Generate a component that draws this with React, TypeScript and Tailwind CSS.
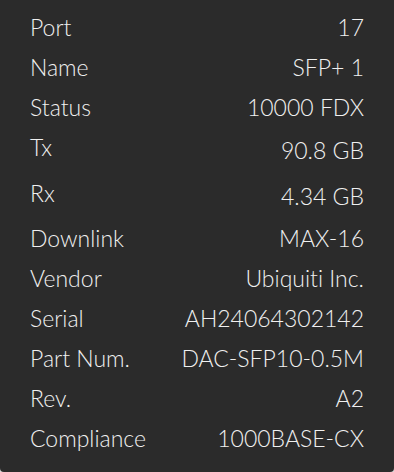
type Row = { label: string; value: string; tall?: number };

const rows: Row[] = [
  { label: "Port", value: "17" },
  { label: "Name", value: "SFP+ 1" },
  { label: "Status", value: "10000 FDX" },
  { label: "Tx", value: "90.8 GB", tall: 46 },
  { label: "Rx", value: "4.34 GB", tall: 45 },
  { label: "Downlink", value: "MAX-16" },
  { label: "Vendor", value: "Ubiquiti Inc." },
  { label: "Serial", value: "AH24064302142" },
  { label: "Part Num.", value: "DAC-SFP10-0.5M" },
  { label: "Rev.", value: "A2" },
  { label: "Compliance", value: "1000BASE-CX" },
];

export default function App() {
  return (
    <div className="bg-[#d9d9d9] w-[394px] h-[472px]">
      <div
        className="bg-[#2b2b2b] text-[#f0f0f0] w-full h-full rounded-b-[4px] pt-[7px] pl-[30px] pr-[30px] text-[23px] leading-[40px] font-light [font-variant-ligatures:none]"
        style={{ fontFamily: "Lato, sans-serif" }}
      >
        {rows.map((r) => (
          <div
            key={r.label}
            className="flex justify-between whitespace-nowrap"
            style={{ height: r.tall ?? 40 }}
          >
            <span>{r.label}</span>
            <span className={r.tall ? "pt-[3px]" : ""}>{r.value}</span>
          </div>
        ))}
      </div>
    </div>
  );
}
